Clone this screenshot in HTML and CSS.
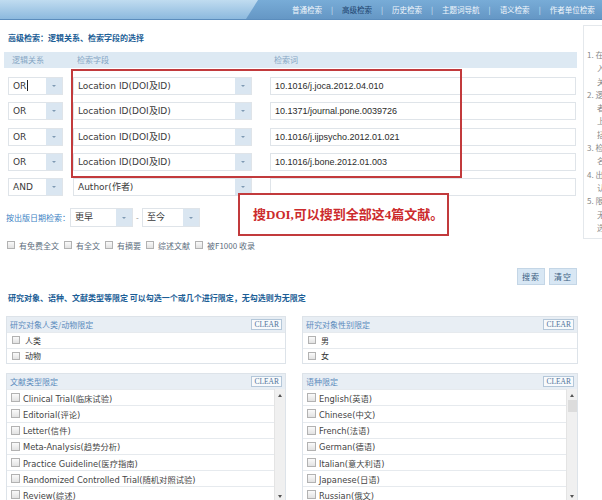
FILE: index.html
```html
<!DOCTYPE html>
<html lang="zh-CN">
<head>
    <meta charset="UTF-8">
    <meta name="viewport" content="width=device-width, initial-scale=1.0">
    <title>高级检索</title>
    <link rel="stylesheet" href="styles.css">
</head>
<body>
    <div class="topbar">
        <div class="brand"></div>
        <ul class="nav">
            <li><a href="#">普通检索</a></li>
            <li class="sep">|</li>
            <li class="on"><a href="#">高级检索</a></li>
            <li class="sep">|</li>
            <li><a href="#">历史检索</a></li>
            <li class="sep">|</li>
            <li><a href="#">主题词导航</a></li>
            <li class="sep">|</li>
            <li><a href="#">语义检索</a></li>
            <li class="sep">|</li>
            <li><a href="#">作者单位检索</a></li>
        </ul>
    </div>

    <div class="page">
        <div class="main">
            <h3 class="sec-title">高级检索：逻辑关系、检索字段的选择</h3>

            <div class="query">
                <div class="qhead">
                    <span>逻辑关系</span>
                    <span>检索字段</span>
                    <span>检索词</span>
                </div>
                <div class="qrows">
                    <div class="qrow">
                        <div class="select w-logic"><span class="val">OR<i class="caret"></i></span><span class="btn"></span></div>
                        <div class="select w-field"><span class="val">Location ID(DOI及ID)</span><span class="btn"></span></div>
                        <div class="term">10.1016/j.joca.2012.04.010</div>
                    </div>
                    <div class="qrow">
                        <div class="select w-logic"><span class="val">OR</span><span class="btn"></span></div>
                        <div class="select w-field"><span class="val">Location ID(DOI及ID)</span><span class="btn"></span></div>
                        <div class="term">10.1371/journal.pone.0039726</div>
                    </div>
                    <div class="qrow">
                        <div class="select w-logic"><span class="val">OR</span><span class="btn"></span></div>
                        <div class="select w-field"><span class="val">Location ID(DOI及ID)</span><span class="btn"></span></div>
                        <div class="term">10.1016/j.ijpsycho.2012.01.021</div>
                    </div>
                    <div class="qrow">
                        <div class="select w-logic"><span class="val">OR</span><span class="btn"></span></div>
                        <div class="select w-field"><span class="val">Location ID(DOI及ID)</span><span class="btn"></span></div>
                        <div class="term">10.1016/j.bone.2012.01.003</div>
                    </div>
                    <div class="qrow">
                        <div class="select w-logic"><span class="val">AND</span><span class="btn"></span></div>
                        <div class="select w-field"><span class="val">Author(作者)</span><span class="btn"></span></div>
                        <div class="term"></div>
                    </div>
                </div>

                <!-- red markup drawn over the form -->
                <div class="mark-box"></div>
                <div class="mark-note">搜DOI,可以搜到全部这4篇文献。</div>
            </div>

            <div class="date-row">
                <span class="date-label">按出版日期检索：</span>
                <div class="select w-from"><span class="val">更早</span><span class="btn"></span></div>
                <span class="dash">-</span>
                <div class="select w-to"><span class="val">至今</span><span class="btn"></span></div>
            </div>

            <div class="filters">
                <label><span class="cb"></span>有免费全文</label>
                <label><span class="cb"></span>有全文</label>
                <label><span class="cb"></span>有摘要</label>
                <label><span class="cb"></span>综述文献</label>
                <label><span class="cb"></span>被F1000 收录</label>
            </div>

            <div class="actions">
                <button class="act">搜索</button>
                <button class="act">清空</button>
            </div>

            <h3 class="sec-title sec-limit">研究对象、语种、文献类型等限定 可以勾选一个或几个进行限定，无勾选则为无限定</h3>

            <div class="panels">
                <div class="panel">
                    <div class="phead"><span>研究对象人类/动物限定</span><span class="clear">CLEAR</span></div>
                    <ul class="opts">
                        <li><span class="cb"></span>人类</li>
                        <li><span class="cb"></span>动物</li>
                    </ul>
                </div>
                <div class="panel">
                    <div class="phead"><span>研究对象性别限定</span><span class="clear">CLEAR</span></div>
                    <ul class="opts">
                        <li><span class="cb"></span>男</li>
                        <li><span class="cb"></span>女</li>
                    </ul>
                </div>
                <div class="panel">
                    <div class="phead"><span>文献类型限定</span><span class="clear">CLEAR</span></div>
                    <div class="plist">
                        <ul class="opts long">
                            <li><span class="cb"></span>Clinical Trial(临床试验)</li>
                            <li><span class="cb"></span>Editorial(评论)</li>
                            <li><span class="cb"></span>Letter(信件)</li>
                            <li><span class="cb"></span>Meta-Analysis(趋势分析)</li>
                            <li><span class="cb"></span>Practice Guideline(医疗指南)</li>
                            <li><span class="cb"></span>Randomized Controlled Trial(随机对照试验)</li>
                            <li><span class="cb"></span>Review(综述)</li>
                        </ul>
                        <div class="scroll"><span class="up"></span><span class="down"></span></div>
                    </div>
                </div>
                <div class="panel">
                    <div class="phead"><span>语种限定</span><span class="clear">CLEAR</span></div>
                    <div class="plist">
                        <ul class="opts long">
                            <li><span class="cb"></span>English(英语)</li>
                            <li><span class="cb"></span>Chinese(中文)</li>
                            <li><span class="cb"></span>French(法语)</li>
                            <li><span class="cb"></span>German(德语)</li>
                            <li><span class="cb"></span>Italian(意大利语)</li>
                            <li><span class="cb"></span>Japanese(日语)</li>
                            <li><span class="cb"></span>Russian(俄文)</li>
                        </ul>
                        <div class="scroll"><span class="up"></span><span class="thumb"></span><span class="down"></span></div>
                    </div>
                </div>
            </div>
        </div>

        <aside class="side">
            <ol>
                <li>1. 在检索词输入框中输入检索词，可同时输入多个检索条件，各检索条件之间用逻辑关系进行组配</li>
                <li>2. 逻辑关系包括AND（并且）、OR（或者）、NOT（不包含）三种，系统按照从上到下的顺序依次进行组配检索，不考虑括号</li>
                <li>3. 检索字段可选择标题、摘要、作者、刊名、DOI等</li>
                <li>4. 出版日期限定可选择检索的起止年份，默认为全部年份</li>
                <li>5. 限定条件可勾选一个或多个，无勾选则为无限定，点击CLEAR可取消该组的全部勾选</li>
            </ol>
        </aside>
    </div>
</body>
</html>
```

FILE: styles.css
```css
html, body {
    margin: 0;
    overflow: hidden;
}
body {
    width: 602px;
    height: 500px;
    background: #fff;
    color: #333;
    font-family: "Noto Sans CJK SC", sans-serif;
    font-size: 8px;
}
ul, ol {
    list-style: none;
    margin: 0;
    padding: 0;
}

/* top navigation bar */
.topbar {
    display: flex;
    height: 19px;
    background: linear-gradient(#78acd7, #6597c5);
    border-bottom: 1px solid #5b8dbd;
}
.brand {
    width: 258px;
    flex: none;
    background: linear-gradient(#c0dcf0, #8cb9de);
    clip-path: polygon(0 0, 100% 0, calc(100% - 12px) 100%, 0 100%);
}
.nav {
    display: flex;
    align-items: center;
    margin-left: 34px;
    font-size: 7.5px;
    white-space: nowrap;
}
.nav a {
    color: #f2f7fc;
    text-decoration: none;
}
.nav .on a {
    color: #1d436d;
}
.nav .sep {
    margin: 0 9px;
    color: #d3e5f4;
}

.page {
    display: flex;
}
.main {
    width: 580px;
    flex: none;
}

.sec-title {
    margin: 12px 0 0 8px;
    font-size: 8px;
    line-height: 12px;
    font-weight: bold;
    color: #1c5e96;
    white-space: nowrap;
}
.sec-limit {
    margin-top: 7px;
}

/* query builder */
.query {
    position: relative;
    margin-top: 8px;
    padding-left: 8px;
}
.qhead, .qrow {
    display: grid;
    grid-template-columns: 65px 197px 306px;
}
.qhead {
    width: 573px;
    height: 16px;
    box-sizing: border-box;
    margin-left: -4px;
    padding-left: 4px;
    background: #dde9f3;
    line-height: 16px;
    color: #86a6c4;
}
.qhead span {
    padding-left: 4px;
}
.qrows {
    display: grid;
    row-gap: 7.3px;
    margin-top: 9px;
}
.qrow {
    height: 18px;
}

.select {
    display: flex;
    height: 18px;
    box-sizing: border-box;
    border: 1px solid #dfe4e9;
    background: #fff;
}
.select .val {
    flex: 1;
    padding-left: 4px;
    line-height: 16px;
    font-family: "DejaVu Sans", sans-serif;
    font-size: 9px;
    color: #3a3a3a;
    white-space: nowrap;
}
.select .btn {
    width: 16px;
    margin-left: 3px;
    background: #dae6f1;
    display: flex;
    align-items: center;
    justify-content: center;
}
.select .btn::after {
    content: "";
    border-left: 2px solid transparent;
    border-right: 2px solid transparent;
    border-top: 2px solid #7f9ab4;
}
.caret {
    display: inline-block;
    width: 1px;
    height: 11px;
    margin-left: 1px;
    background: #222;
    vertical-align: -2px;
}
.w-logic { width: 55px; }
.w-field { width: 179px; }
.w-from { width: 63px; }
.w-to { width: 58px; }
.w-from .val, .w-to .val {
    font-family: "Noto Sans CJK SC", sans-serif;
    font-size: 9px;
}

.term {
    width: 306px;
    height: 18px;
    box-sizing: border-box;
    border: 1px solid #dfe4e9;
    padding-left: 4px;
    line-height: 16px;
    font-family: "Liberation Sans", Arial, sans-serif;
    font-size: 9px;
    color: #2b2b2b;
}

.mark-box {
    position: absolute;
    left: 71px;
    top: 17px;
    width: 391px;
    height: 109px;
    box-sizing: border-box;
    border: 2px solid #c23a3c;
}
.mark-note {
    position: absolute;
    left: 238px;
    top: 141px;
    width: 211px;
    height: 43px;
    box-sizing: border-box;
    border: 2px solid #c23a3c;
    background: #fff;
    padding-left: 13px;
    line-height: 39px;
    font-family: "Liberation Serif", "Noto Sans CJK SC", serif;
    font-size: 13px;
    font-weight: bold;
    color: #cc2b2d;
    white-space: nowrap;
}

/* date range */
.date-row {
    display: flex;
    align-items: center;
    height: 19px;
    margin-top: 12px;
    padding-left: 6px;
}
.date-row .select {
    height: 19px;
}
.date-label {
    width: 64px;
    color: #3b7fc4;
}
.dash {
    width: 9px;
    text-align: center;
    color: #888;
}

/* checkboxes */
.cb {
    display: inline-block;
    flex: none;
    width: 6px;
    height: 6px;
    border: 1px solid #b2b2b2;
    background: linear-gradient(#fafafa, #e2e2e2);
}
.filters {
    display: flex;
    gap: 5px;
    height: 12px;
    margin-top: 12px;
    padding-left: 7px;
    color: #5d6d7d;
}
.filters label {
    display: flex;
    align-items: center;
    gap: 4px;
    white-space: nowrap;
}

.actions {
    display: flex;
    justify-content: flex-end;
    gap: 4px;
    width: 577px;
    margin-top: 17px;
}
.act {
    width: 28px;
    height: 17px;
    padding: 0;
    border: 1px solid #c4d6e6;
    background: #d8e7f4;
    color: #3c5e82;
    font-family: "Noto Sans CJK SC", sans-serif;
    font-size: 8px;
    letter-spacing: 1px;
}

/* limit panels */
.panels {
    display: grid;
    grid-template-columns: 280px 276px;
    column-gap: 16px;
    row-gap: 9px;
    margin: 12px 0 0 6px;
}
.panel {
    border: 1px solid #dde3e9;
}
.phead {
    display: flex;
    justify-content: space-between;
    align-items: center;
    height: 15px;
    padding: 0 3px;
    background: #e8eef4;
    color: #5b8bbd;
}
.clear {
    padding: 0 2px;
    border: 1px solid #b4c7d9;
    background: #f8fafc;
    line-height: 9px;
    font-family: "Liberation Serif", serif;
    font-size: 7.5px;
    color: #4f739a;
}
.opts li {
    display: flex;
    align-items: center;
    gap: 5px;
    height: 14.5px;
    padding-left: 5px;
    border-top: 1px solid #e6eaee;
}
.plist {
    display: flex;
}
.opts.long {
    flex: 1;
}
.opts.long li {
    gap: 3px;
    height: 15.2px;
    padding-left: 4px;
    font-family: "DejaVu Sans", "Noto Sans CJK SC", sans-serif;
    font-size: 8.3px;
    color: #444;
    white-space: nowrap;
}
.opts.long .cb {
    width: 7px;
    height: 7px;
}
.scroll {
    display: flex;
    flex-direction: column;
    align-items: center;
    width: 11px;
    flex: none;
    padding: 5px 0;
    box-sizing: border-box;
    background: #f0f0f0;
    border-left: 1px solid #e4e4e4;
}
.scroll .up, .scroll .down {
    border-left: 2.5px solid transparent;
    border-right: 2.5px solid transparent;
}
.scroll .up {
    border-bottom: 3px solid #555;
}
.scroll .down {
    margin-top: auto;
    border-top: 3px solid #555;
}
.scroll .thumb {
    width: 9px;
    height: 12px;
    margin-top: 3px;
    background: #dcdcdc;
}

/* help sidebar, mostly off screen */
.side {
    width: 160px;
    height: 214px;
    flex: none;
    margin: 5px 0 0 3px;
    padding: 22px 0 0 3px;
    box-sizing: border-box;
    border: 1px solid #e4e8ec;
    color: #888;
    line-height: 13.3px;
    overflow: hidden;
}
.side li {
    padding-left: 10px;
    text-indent: -10px;
}
```
